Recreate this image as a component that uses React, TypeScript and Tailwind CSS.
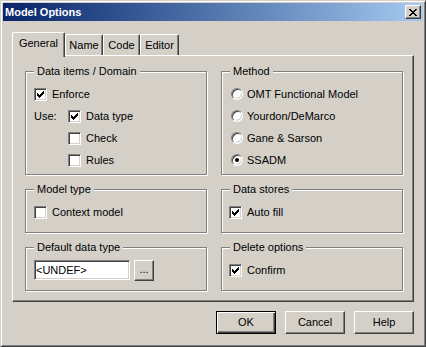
import React from 'react';

const CHECK = ['......#', '.....##', '#...###', '##.###.', '#####..', '.###...', '..#....'];
const CROSS = ['##....##', '.##..##.', '..####..', '...##...', '..####..', '.##..##.', '##....##'];

// draws a small pixel glyph (check mark, close cross) as crisp rects
const Pixels = ({ rows }: { rows: string[] }) => (
  <svg width={rows[0].length} height={rows.length} shapeRendering="crispEdges">
    {rows.map((row, y) =>
      row.split('').map((c, x) => (c === '#' ? <rect key={`${x}-${y}`} x={x} y={y} width="1" height="1" fill="#000" /> : null))
    )}
  </svg>
);

const sunken =
  'border border-t-[#808080] border-l-[#808080] border-r-white border-b-white shadow-[inset_1px_1px_0_#404040,inset_-1px_-1px_0_#d4d0c8]';
const raised =
  'border border-t-white border-l-white border-r-[#404040] border-b-[#404040] shadow-[inset_-1px_-1px_0_#808080]';

const CheckBox = ({ checked, label }: { checked?: boolean; label: string }) => (
  <div className="flex items-center h-[22px] gap-[5px]">
    <span className={`w-[13px] h-[13px] bg-white shrink-0 flex items-center justify-center ${sunken}`}>
      {checked && <Pixels rows={CHECK} />}
    </span>
    <span>{label}</span>
  </div>
);

const Radio = ({ checked, label }: { checked?: boolean; label: string }) => (
  <div className="flex items-center h-[22px] gap-[4px]">
    <span
      className={`w-[12px] h-[12px] rounded-full bg-white shrink-0 flex items-center justify-center ${sunken}`}
    >
      {checked && <span className="w-[4px] h-[4px] rounded-full bg-black" />}
    </span>
    <span>{label}</span>
  </div>
);

const Group = ({ label, className = '', children }: { label: string; className?: string; children?: React.ReactNode }) => (
  <div className={`relative border border-[#808080] shadow-[inset_1px_1px_0_#fff,1px_1px_0_#fff] pt-[11px] ${className}`}>
    <span className="absolute -top-[7px] left-[8px] px-[3px] bg-[#d4d0c8] leading-[13px]">{label}</span>
    {children}
  </div>
);

const Tab = ({ label, width, active }: { label: string; width: string; active?: boolean }) => (
  <div
    className={`flex items-center justify-center bg-[#d4d0c8] border-t border-l border-r border-t-white border-l-white border-r-[#404040] shadow-[inset_-1px_0_0_#808080] rounded-tl-[2px] rounded-tr-[2px] ${width} ${
      active ? 'h-[25px] -mb-[2px] relative z-10 pb-[3px]' : 'h-[21px]'
    }`}
  >
    {label}
  </div>
);

export default function App() {
  return (
    <div className="w-[426px] h-[347px] bg-[#d4d0c8] border border-t-[#d4d0c8] border-l-[#d4d0c8] border-r-[#404040] border-b-[#404040] shadow-[inset_1px_1px_0_#fff,inset_-1px_-1px_0_#808080] p-[2px] flex flex-col font-['Liberation_Sans',Arial,sans-serif] text-[11px] leading-[13px] text-black">
      {/* Title bar */}
      <div className="h-[18px] shrink-0 flex items-center justify-between bg-linear-to-r from-[#0a246a] to-[#a6caf0] pl-[2px] pr-[2px]">
        <span className="font-bold text-white">Model Options</span>
        <button className={`w-[16px] h-[14px] bg-[#d4d0c8] flex items-center justify-center ${raised}`}>
          <Pixels rows={CROSS} />
        </button>
      </div>

      <div className="pl-[9px] pt-[11px] flex flex-col">
        {/* Tabs */}
        <div className="flex items-end h-[23px]">
          <Tab label="General" width="w-[53px]" active />
          <Tab label="Name" width="w-[38px]" />
          <Tab label="Code" width="w-[37px]" />
          <Tab label="Editor" width="w-[39px]" />
        </div>

        {/* Tab page */}
        <div className={`w-[402px] h-[247px] pl-[12px] pt-[15px] ${raised}`}>
          <div className="grid grid-cols-[182px_182px] grid-rows-[104px_44px_44px] gap-x-[14px] gap-y-[14px]">
            <Group label="Data items / Domain" className="pl-[8px]">
              <CheckBox checked label="Enforce" />
              <div className="flex items-center">
                <span className="w-[34px]">Use:</span>
                <CheckBox checked label="Data type" />
              </div>
              <div className="pl-[34px]">
                <CheckBox label="Check" />
                <CheckBox label="Rules" />
              </div>
            </Group>

            <Group label="Method" className="pl-[9px]">
              <Radio label="OMT Functional Model" />
              <Radio label="Yourdon/DeMarco" />
              <Radio label="Gane & Sarson" />
              <Radio checked label="SSADM" />
            </Group>

            <Group label="Model type" className="pl-[8px]">
              <CheckBox label="Context model" />
            </Group>

            <Group label="Data stores" className="pl-[7px]">
              <CheckBox checked label="Auto fill" />
            </Group>

            <Group label="Default data type" className="pl-[8px]">
              <div className="flex items-center h-[22px] gap-[4px]">
                <div className={`w-[96px] h-[20px] bg-white flex items-center pl-[1px] ${sunken}`}>&lt;UNDEF&gt;</div>
                <button className={`w-[20px] h-[21px] bg-[#d4d0c8] flex items-center justify-center pb-[2px] ${raised}`}>
                  ...
                </button>
              </div>
            </Group>

            <Group label="Delete options" className="pl-[7px]">
              <CheckBox checked label="Confirm" />
            </Group>
          </div>
        </div>

        {/* Dialog buttons */}
        <div className="flex justify-end gap-[9px] w-[402px] pt-[9px]">
          <button className="w-[60px] h-[23px] bg-[#d4d0c8] border border-black shadow-[inset_1px_1px_0_#fff,inset_-1px_-1px_0_#404040,inset_-2px_-2px_0_#808080]">
            OK
          </button>
          <button className={`w-[60px] h-[23px] bg-[#d4d0c8] ${raised}`}>Cancel</button>
          <button className={`w-[60px] h-[23px] bg-[#d4d0c8] ${raised}`}>Help</button>
        </div>
      </div>
    </div>
  );
}
